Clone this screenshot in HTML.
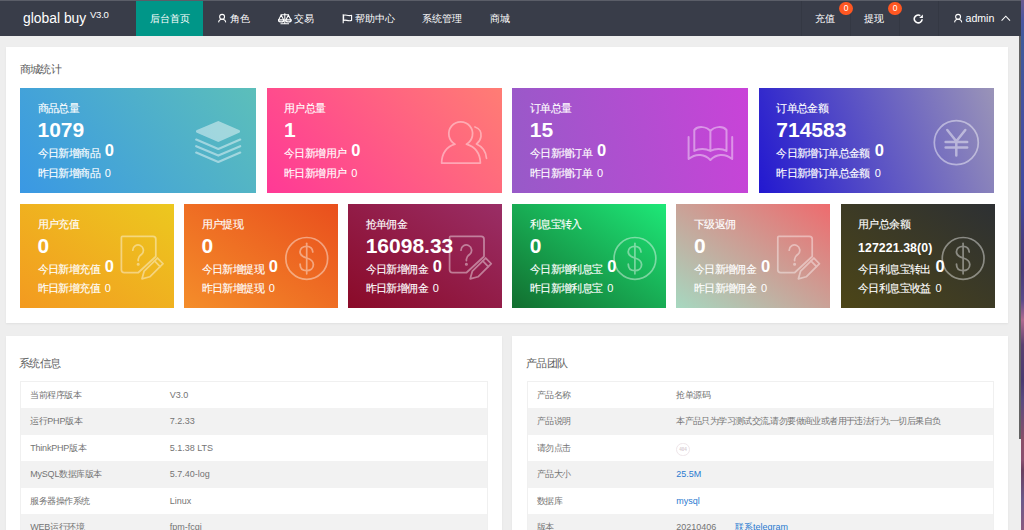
<!DOCTYPE html>
<html><head><meta charset="utf-8">
<style>
*{box-sizing:border-box;margin:0;padding:0}
html,body{width:1024px;height:530px;overflow:hidden}
body{background:#eeeeee;font-family:"Liberation Sans",sans-serif;position:relative;color:#333}
.abs{position:absolute;white-space:nowrap}
#strip{position:absolute;left:1021px;top:0;width:3px;height:530px;background:linear-gradient(180deg,#6a5a90 0px,#4a55a0 20px,#3f5a9a 40px,#4550a0 120px,#4048a0 200px,#4a3c80 240px,#4a3a78 270px,#5a4a8a 300px,#b06a90 320px,#5a4070 345px,#4a3a70 380px,#5a4a80 400px,#8a5068 440px,#8a5070 460px,#6a4060 470px,#6a5a8a 500px,#8a5a80 530px)}
#stripline{position:absolute;left:1019px;top:36px;width:2px;height:403px;background:#626262}
#hdr{position:absolute;left:0;top:0;width:1021px;height:36px;background:#393d49}
#hline{position:absolute;left:0;top:0;width:1021px;height:1px;background:#5b5e68}
.hi{position:absolute}
.nav{position:absolute;top:1px;height:35px;line-height:35px;color:#fff;font-size:10.4px;white-space:nowrap}
.nav.act{background:#009688}
.sep{position:absolute;top:1px;width:1px;height:35px;background:#343843}
.badge{position:absolute;width:14px;height:13px;border-radius:7px;background:#ff5722;color:#fff;font-size:8.5px;line-height:13px;text-align:center}
.panel{position:absolute;background:#fff;box-shadow:0 1px 2px rgba(0,0,0,.06)}
.ptitle{position:absolute;font-size:11px;letter-spacing:-0.55px;color:#5c5c5c;line-height:12px}
.card{position:absolute;color:#fff;overflow:hidden}
.card .t{position:absolute;left:17.5px;top:13.3px;font-size:11px;letter-spacing:-0.6px;line-height:14px;-webkit-text-stroke:0.12px #fff}
.card .n{position:absolute;left:17.5px;top:30px;font-size:21px;font-weight:bold;line-height:24px}
.card .l1{position:absolute;left:17.5px;top:56px;font-size:11px;letter-spacing:-0.6px;line-height:14px;-webkit-text-stroke:0.12px #fff}
.card .l1 b{font-size:16.5px;font-weight:bold;margin-left:2.3px;letter-spacing:0;-webkit-text-stroke:0;position:relative;top:-1px}
.card .l2{position:absolute;left:17.5px;top:77.5px;font-size:11px;letter-spacing:-0.6px;line-height:14px;-webkit-text-stroke:0.12px #fff}
.card .l2 i{font-style:normal;margin-left:2.3px;letter-spacing:0;-webkit-text-stroke:0}
.card svg{position:absolute}
.tbl{position:absolute;border:1px solid #f0f0f0;border-bottom:none}
.tr{height:26.46px;position:relative;font-size:9px;color:#747474;line-height:26.5px}
.tr.g{background:#f2f2f2}
.tr span{position:absolute}
.tr span:first-child{letter-spacing:-0.45px}
.cj{letter-spacing:-0.45px}
.tr i{font-style:normal;letter-spacing:-0.2px}
.blue{color:#2a7ad0}
</style></head><body>
<div id="stripline"></div><div id="strip"></div>
<div id="hdr">
  <div id="hline"></div>
  <div class="abs" style="left:22.5px;top:8px;color:#fff;font-size:15.5px;line-height:20px;transform:scaleX(0.895);transform-origin:0 0">global buy</div><div class="abs" style="left:89.9px;top:9.7px;color:#fff;font-size:9.6px;line-height:10px;letter-spacing:-0.25px">V3.0</div>
  <div class="nav act" style="left:136px;width:67px;text-align:center">后台首页</div>
  <svg class="hi" style="left:217px;top:13px" width="10" height="10" viewBox="0 0 10 10" fill="none" stroke="#fff" stroke-width="1.1"><circle cx="5.1" cy="3.8" r="2.45"/><path d="M1.6 9.4C1.8 7.3 3 6.3 5.1 6.3C7.2 6.3 8.5 7.3 8.7 9.4"/></svg>
  <div class="nav" style="left:230px">角色</div>
  <svg class="hi" style="left:277.5px;top:12.5px" width="14" height="12" viewBox="0 0 14 12" fill="none" stroke="#fff" stroke-width="1.05" stroke-linejoin="round"><path d="M6.8 0.9V10.8M2.6 1.8H11M2.5 10.8H11"/><circle cx="6.8" cy="0.9" r="0.75" fill="#fff" stroke="none"/><path d="M3.15 1.9L0.6 6.9M3.15 1.9L5.7 6.9M10.4 1.9L7.9 6.9M10.4 1.9L12.9 6.9"/><path d="M0.3 6.9H6A2.85 2 0 0 1 0.3 6.9ZM7.6 6.9H13.3A2.85 2 0 0 1 7.6 6.9Z" stroke-width="1.2"/></svg>
  <div class="nav" style="left:294px">交易</div>
  <svg class="hi" style="left:342px;top:13.5px" width="11" height="10" viewBox="0 0 11 10" fill="none" stroke="#fff" stroke-width="1.1" stroke-linejoin="round"><path d="M1.2 0.3V9.3"/><path d="M1.6 1.3C3.8 0.2 5.8 2.4 9.6 1.3V6.4C5.8 7.5 3.8 5.3 1.6 6.4Z"/></svg>
  <div class="nav" style="left:355px">帮助中心</div>
  <div class="nav" style="left:422px">系统管理</div>
  <div class="nav" style="left:489.5px">商城</div>
  <div class="sep" style="left:800.5px"></div>
  <div class="sep" style="left:850px"></div>
  <div class="sep" style="left:898.5px"></div>
  <div class="sep" style="left:938px"></div>
  <div class="nav" style="left:815px">充值</div>
  <div class="badge" style="left:839px;top:2px">0</div>
  <div class="nav" style="left:864px">提现</div>
  <div class="badge" style="left:888px;top:2px">0</div>
  <svg class="hi" style="left:913px;top:13.5px" width="11" height="11" viewBox="0 0 11 11" fill="none" stroke="#fff" stroke-width="1.6"><path d="M9.15 5.3A3.95 3.95 0 1 1 7.3 1.6"/><path d="M9.9 0.4V4.1H6.2Z" fill="#fff" stroke="none"/></svg>
  <svg class="hi" style="left:952.5px;top:13px" width="10" height="10" viewBox="0 0 10 10" fill="none" stroke="#fff" stroke-width="1.1"><circle cx="5.1" cy="3.8" r="2.45"/><path d="M1.6 9.4C1.8 7.3 3 6.3 5.1 6.3C7.2 6.3 8.5 7.3 8.7 9.4"/></svg>
  <div class="nav" style="left:965.5px;font-size:10.6px">admin</div>
  <svg class="hi" style="left:1000.8px;top:15px" width="10" height="6.5" viewBox="0 0 10 6.5" fill="none" stroke="#fff" stroke-width="1.05"><path d="M0.6 5.6L4.8 1.2L9 5.6"/></svg>
</div>

<div class="panel" style="left:6px;top:46.5px;width:1002px;height:276.5px"></div>
<div class="ptitle" style="left:19.5px;top:63px">商城统计</div>

<!-- row1 -->
<div class="card" style="left:20px;top:88px;width:235.5px;height:104.5px;background:linear-gradient(52deg,#3a98e4,#5cbfba)">
  <div class="t">商品总量</div><div class="n">1079</div>
  <div class="l1">今日新增商品 <b>0</b></div><div class="l2">昨日新增商品 <i>0</i></div>
</div>
<div class="card" style="left:266.5px;top:88px;width:235.5px;height:104.5px;background:linear-gradient(50deg,#ff3996,#ff7d74)">
  <div class="t">用户总量</div><div class="n">1</div>
  <div class="l1">今日新增用户 <b>0</b></div><div class="l2">昨日新增用户 <i>0</i></div>
</div>
<div class="card" style="left:512.3px;top:88px;width:235.5px;height:104.5px;background:linear-gradient(80deg,#975ac8,#c943d8)">
  <div class="t">订单总量</div><div class="n">15</div>
  <div class="l1">今日新增订单 <b>0</b></div><div class="l2">昨日新增订单 <i>0</i></div>
</div>
<div class="card" style="left:758.8px;top:88px;width:235.5px;height:104.5px;background:linear-gradient(70deg,#2218d0,#9a94b8)">
  <div class="t">订单总金额</div><div class="n">714583</div>
  <div class="l1">今日新增订单总金额 <b>0</b></div><div class="l2">昨日新增订单总金额 <i>0</i></div>
</div>

<!-- row2 -->
<div class="card" style="left:20px;top:203.7px;width:154px;height:104px;background:linear-gradient(to top right,#f39a20,#ecc81f)">
  <div class="t">用户充值</div><div class="n">0</div>
  <div class="l1">今日新增充值 <b>0</b></div><div class="l2">昨日新增充值 <i>0</i></div>
</div>
<div class="card" style="left:184.1px;top:203.7px;width:154px;height:104px;background:linear-gradient(to top right,#f48d2a,#e94f1d)">
  <div class="t">用户提现</div><div class="n">0</div>
  <div class="l1">今日新增提现 <b>0</b></div><div class="l2">昨日新增提现 <i>0</i></div>
</div>
<div class="card" style="left:348.2px;top:203.7px;width:154px;height:104px;background:linear-gradient(to top right,#8a0a28,#9a2e66)">
  <div class="t">抢单佣金</div><div class="n">16098.33</div>
  <div class="l1">今日新增佣金 <b>0</b></div><div class="l2">昨日新增佣金 <i>0</i></div>
</div>
<div class="card" style="left:512.3px;top:203.7px;width:154px;height:104px;background:linear-gradient(to top right,#126e2f,#1ee878)">
  <div class="t">利息宝转入</div><div class="n">0</div>
  <div class="l1">今日新增利息宝 <b>0</b></div><div class="l2">昨日新增利息宝 <i>0</i></div>
</div>
<div class="card" style="left:676.4px;top:203.7px;width:154px;height:104px;background:linear-gradient(to top right,#a6d8c0,#ee6b6e)">
  <div class="t">下级返佣</div><div class="n">0</div>
  <div class="l1">今日新增佣金 <b>0</b></div><div class="l2">昨日新增佣金 <i>0</i></div>
</div>
<div class="card" style="left:840.5px;top:203.7px;width:154px;height:104px;background:linear-gradient(to top right,#4c4517,#2d3033)">
  <div class="t">用户总余额</div><div class="n" style="font-size:12.3px;top:32px;letter-spacing:0.1px">127221.38(0)</div>
  <div class="l1">今日利息宝转出 <b>0</b></div><div class="l2">今日利息宝收益 <i>0</i></div>
</div>


<svg id="icons" style="position:absolute;left:0;top:0;pointer-events:none" width="1024" height="530" viewBox="0 0 1024 530">

<!-- layers -->
<g fill="#fff" stroke="#fff" opacity="0.45" stroke-linejoin="round" stroke-linecap="round">
 <path d="M197.5 131.4L218.3 122.6L238.5 131.4L218.3 140.4Z" stroke-width="3"/>
 <path d="M196.2 139.6L218.3 149L240.2 139.6M196.2 146.2L218.3 155.6L240.2 146.2M196.2 152.6L218.3 162L240.2 152.6" fill="none" stroke-width="2.2"/>
</g>
<!-- users -->
<g fill="none" stroke="#fff" opacity="0.42" stroke-width="1.75" stroke-linejoin="round" stroke-linecap="round">
 <path d="M455 144.2A11.9 11.9 0 1 1 466.4 144.2C474 146.5 480 152 480.4 163H441.6C442 152 447.5 146.5 455 144.2Z"/>
 <path d="M475 127C480 128.5 481.5 133 481 136.5C480.5 140 478.5 142.5 476.5 144C482 146.5 486 151 486.5 158.3"/>
</g>
<!-- book -->
<g fill="none" stroke="#fff" opacity="0.42" stroke-width="2" stroke-linejoin="round" stroke-linecap="round">
 <path d="M710.4 151V131C706.5 126.5 698 125.5 694.3 130V151C699 148 706 148.5 710.4 151C714.8 148.5 721.8 148 726.5 151V130C722.8 125.5 714.3 126.5 710.4 131"/>
 <path d="M688.6 137V159C696 152.8 705 154 710.4 160C715.8 154 724.8 152.8 732.2 159V137"/>
</g>
<!-- yen -->
<g fill="none" stroke="#fff" opacity="0.45" stroke-linecap="round">
 <circle cx="956.3" cy="142.6" r="22" stroke-width="1.7"/>
 <path d="M947.3 130L956.3 141.2L965.3 130M956.3 141.2V155.6M945.6 141.9H967.2M945.6 147.6H967.2" stroke-width="2.5"/>
</g>
<g fill="none" stroke="#fff" opacity="0.42" stroke-width="1.75" stroke-linejoin="round" stroke-linecap="round">
  <path d="M138.4 272.5H124.2Q121.4 272.5 121.4 269.7V237.4Q121.4 236.4 122.4 236.4H153Q155.8 236.4 155.8 239.2V256.5Z"/>
  <path d="M132.8 250.2A5.3 5.3 0 1 1 141.6 254.3Q138.2 256.6 138.2 259.2V260.6"/>
  <circle cx="138.2" cy="264.3" r="0.7" stroke-width="1.7"/>
  <g transform="translate(142 278.8) rotate(-44.4)">
   <path d="M0 0L7 -4H25.6V4H7Z"/>
   <path d="M21.4 -4V4"/>
  </g>
 </g>
<g transform="translate(328.2 0)"><g fill="none" stroke="#fff" opacity="0.42" stroke-width="1.75" stroke-linejoin="round" stroke-linecap="round">
  <path d="M138.4 272.5H124.2Q121.4 272.5 121.4 269.7V237.4Q121.4 236.4 122.4 236.4H153Q155.8 236.4 155.8 239.2V256.5Z"/>
  <path d="M132.8 250.2A5.3 5.3 0 1 1 141.6 254.3Q138.2 256.6 138.2 259.2V260.6"/>
  <circle cx="138.2" cy="264.3" r="0.7" stroke-width="1.7"/>
  <g transform="translate(142 278.8) rotate(-44.4)">
   <path d="M0 0L7 -4H25.6V4H7Z"/>
   <path d="M21.4 -4V4"/>
  </g>
 </g></g>
<g transform="translate(656.4 0)"><g fill="none" stroke="#fff" opacity="0.42" stroke-width="1.75" stroke-linejoin="round" stroke-linecap="round">
  <path d="M138.4 272.5H124.2Q121.4 272.5 121.4 269.7V237.4Q121.4 236.4 122.4 236.4H153Q155.8 236.4 155.8 239.2V256.5Z"/>
  <path d="M132.8 250.2A5.3 5.3 0 1 1 141.6 254.3Q138.2 256.6 138.2 259.2V260.6"/>
  <circle cx="138.2" cy="264.3" r="0.7" stroke-width="1.7"/>
  <g transform="translate(142 278.8) rotate(-44.4)">
   <path d="M0 0L7 -4H25.6V4H7Z"/>
   <path d="M21.4 -4V4"/>
  </g>
 </g></g>
<g fill="none" stroke="#fff" opacity="0.42" stroke-width="1.7" stroke-linecap="round">
  <circle cx="306.75" cy="258.4" r="20.9"/>
  <path d="M306.7 243.3V273.8"/>
  <path d="M312.8 252C312.5 248 310 246.3 306.7 246.3C302.5 246.3 300 248.8 300 252C300 255.8 303.5 257 306.7 258C310.5 259.2 313.4 260.8 313.4 264.5C313.4 268.3 310.5 270.6 306.7 270.6C302.5 270.6 300.1 268 300.1 264.2" stroke-width="1.8"/>
 </g>
<g transform="translate(328.2 0)"><g fill="none" stroke="#fff" opacity="0.42" stroke-width="1.7" stroke-linecap="round">
  <circle cx="306.75" cy="258.4" r="20.9"/>
  <path d="M306.7 243.3V273.8"/>
  <path d="M312.8 252C312.5 248 310 246.3 306.7 246.3C302.5 246.3 300 248.8 300 252C300 255.8 303.5 257 306.7 258C310.5 259.2 313.4 260.8 313.4 264.5C313.4 268.3 310.5 270.6 306.7 270.6C302.5 270.6 300.1 268 300.1 264.2" stroke-width="1.8"/>
 </g></g>
<g transform="translate(656.4 0)"><g fill="none" stroke="#fff" opacity="0.42" stroke-width="1.7" stroke-linecap="round">
  <circle cx="306.75" cy="258.4" r="20.9"/>
  <path d="M306.7 243.3V273.8"/>
  <path d="M312.8 252C312.5 248 310 246.3 306.7 246.3C302.5 246.3 300 248.8 300 252C300 255.8 303.5 257 306.7 258C310.5 259.2 313.4 260.8 313.4 264.5C313.4 268.3 310.5 270.6 306.7 270.6C302.5 270.6 300.1 268 300.1 264.2" stroke-width="1.8"/>
 </g></g>
</svg>

<div class="panel" style="left:6px;top:336.3px;width:496px;height:200px"></div>
<div class="ptitle" style="left:19px;top:357px">系统信息</div>
<div class="tbl" style="left:20px;top:381px;width:467.5px">
  <div class="tr"><span style="left:9.2px">当前程序版本</span><span style="left:148.7px">V3.0</span></div>
  <div class="tr g"><span style="left:9.2px">运行<i>PHP</i>版本</span><span style="left:148.7px">7.2.33</span></div>
  <div class="tr"><span style="left:9.2px"><i>ThinkPHP</i>版本</span><span style="left:148.7px">5.1.38 LTS</span></div>
  <div class="tr g"><span style="left:9.2px"><i>MySQL</i>数据库版本</span><span style="left:148.7px">5.7.40-log</span></div>
  <div class="tr"><span style="left:9.2px">服务器操作系统</span><span style="left:148.7px">Linux</span></div>
  <div class="tr g"><span style="left:9.2px"><i>WEB</i>运行环境</span><span style="left:148.7px">fpm-fcgi</span></div>
</div>

<div class="panel" style="left:512.3px;top:336.3px;width:496px;height:200px"></div>
<div class="ptitle" style="left:526px;top:357px">产品团队</div>
<div class="tbl" style="left:526.5px;top:381px;width:467.5px">
  <div class="tr"><span style="left:9.2px">产品名称</span><span class="cj" style="left:148.7px">抢单源码</span></div>
  <div class="tr g"><span style="left:9.2px">产品说明</span><span class="cj" style="left:148.7px;letter-spacing:-0.6px">本产品只为学习测试交流,请勿要做商业或者用于违法行为,一切后果自负</span></div>
  <div class="tr"><span style="left:9.2px">请勿点击</span><span style="left:148.7px;top:7.9px;width:13.5px;height:13.5px;border:1px solid #efe6ea;border-radius:50%;font-size:4.5px;line-height:11.5px;text-align:center;color:#d8cdd2;letter-spacing:0;font-weight:bold">404</span></div>
  <div class="tr g"><span style="left:9.2px">产品大小</span><span class="blue" style="left:148.7px">25.5M</span></div>
  <div class="tr"><span style="left:9.2px">数据库</span><span class="blue" style="left:148.7px">mysql</span></div>
  <div class="tr g"><span style="left:9.2px">版本</span><span style="left:148.7px">20210406</span><span class="blue" style="left:207.5px">联系telegram</span></div>
</div>
</body></html>
